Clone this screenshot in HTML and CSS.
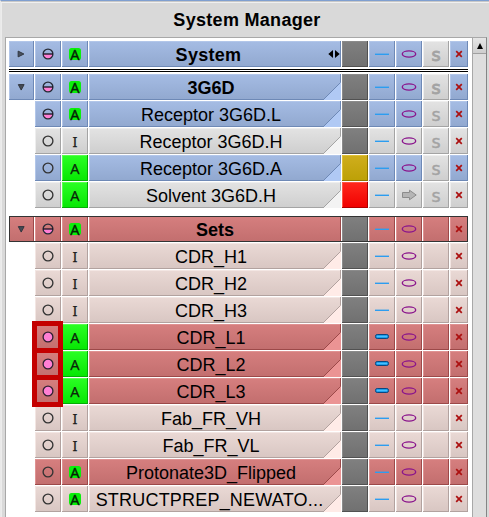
FILE: index.html
```html
<!DOCTYPE html>
<html lang="en">
<head>
<meta charset="utf-8">
<title>System Manager</title>
<link rel="stylesheet" href="styles.css">
</head>
<body>
<svg class="defs" width="0" height="0">
  <symbol id="right" viewBox="0 0 26 26"><path d="M9.5 10 15.5 13 9.5 16z" fill="#48505e" stroke="#30363f"/></symbol>
  <symbol id="down" viewBox="0 0 26 26"><path d="M9.7 10.5h6L12.7 16.2z" fill="#454a54" stroke="#30343c"/></symbol>
  <symbol id="ring" viewBox="0 0 26 26"><circle cx="13" cy="13" r="4.9" fill="none" stroke="#333" stroke-width="1.35"/></symbol>
  <symbol id="half" viewBox="0 0 26 26"><path d="M8 13a5 5 0 0 0 10 0z" fill="#ff7fd4"/><circle cx="13" cy="13" r="4.9" fill="none" stroke="#252a35" stroke-width="1.3"/><path d="M8 13h10" stroke="#181020" stroke-width="1.3"/></symbol>
  <symbol id="full" viewBox="0 0 26 26"><circle cx="13" cy="13" r="4.9" fill="#ff7fd4" stroke="#302030" stroke-width="1.3"/></symbol>
  <symbol id="line" viewBox="0 0 26 26"><path d="M6 13.3h14" stroke="#2c9df0" stroke-width="1.4"/></symbol>
  <symbol id="tube" viewBox="0 0 26 26"><rect x="6.5" y="10.5" width="13" height="4" rx="1.7" fill="#209eea" stroke="#0a4780"/><path d="M8 12.5h10" stroke="#48c0ff"/></symbol>
  <symbol id="oval" viewBox="0 0 26 26"><ellipse cx="13" cy="13" rx="6.7" ry="3.1" fill="none" stroke="#8a148c" stroke-width="1.4"/></symbol>
  <symbol id="arrow" viewBox="0 0 26 26"><path d="M6.5 10.5h7v-2.3l6.7 4.8-6.7 4.8v-2.3h-7z" fill="#b5b5b5" stroke="#8c8c8c"/></symbol>
  <symbol id="cross" viewBox="0 0 18 26"><path d="M6.2 10.2l5.6 5.6M11.8 10.2l-5.6 5.6" stroke="#ac1010" stroke-width="1.7"/></symbol>
  <symbol id="spread" viewBox="0 0 12 10"><path d="M5 1v8L.3 5zM7 1v8l4.7-4z" fill="#000"/></symbol>
</svg>
<main class="window">
  <h1 class="title">System Manager</h1>
  <div class="body">
    <div class="list" id="list"></div>
    <div class="scrollbar"><div class="up"><svg width="8" height="8" viewBox="0 0 8 8"><path d="M4 1 7 7H1z"/></svg></div><div class="track"></div></div>
  </div>
</main>
<script src="script.js"></script>
</body>
</html>
```
FILE: styles.css
```css
body {
  margin: 0;
  background: #d9d9d9;
  font-family: "Liberation Sans", Arial, sans-serif;
  color: #000;
  overflow: hidden;
}
.defs { display: block; width: 0; height: 0; position: absolute; }
svg { display: block; }
.window {
  box-sizing: border-box;
  height: 517px;
  display: flex;
  flex-direction: column;
  border-top: 1px solid #7f9fd0;
  border-left: 1px solid #e9e9e9;
  box-shadow: inset 0 1px #c8c8c8, inset 0 2px #f0f0f0, inset 1px 0 #ececec;
}
.title {
  margin: 0;
  height: 36px;
  font-size: 18px;
  letter-spacing: .3px;
  line-height: 38px;
  text-align: center;
  padding-left: 4px;
}
.body { flex: 1; display: flex; min-height: 0; padding-left: 4px; }
.list {
  width: 463px;
  padding: 3px 0 0 3px;
  background: #fff;
  border: solid #a8a8a8;
  border-width: 1px 0 0 1px;
  overflow: hidden;
}
.row {
  display: grid;
  grid-template-columns: 25px 26px 26px 252px 26px 26px 26px 26px 18px;
  gap: 1px;
  height: 26px;
  width: 459px;
  margin-bottom: 1px;
  position: relative;
  --top: #e3e3e3; --bottom: #cecece; --hi: #eeeeee; --lo: #a4a4a4; --fold: #f3f3f3;
}
.blue { --top: #a5bce4; --bottom: #91a8cf; --hi: #b2c6e9; --lo: #6e89b6; --fold: #b0c9f4; }
.red { --top: #d67f7f; --bottom: #c26e6e; --hi: #df9292; --lo: #9c4949; --fold: #eb9494; }
.pink { --top: #ead9d5; --bottom: #d8c6c2; --hi: #f3e6e3; --lo: #b2a29f; --fold: #ffebe7; }
.cell {
  display: flex;
  align-items: center;
  justify-content: center;
  position: relative;
  overflow: hidden;
  background: linear-gradient(var(--top), var(--bottom));
  box-shadow: inset -1px -1px var(--lo), inset 1px 1px var(--hi);
}
.cell.none { background: none; box-shadow: none; }
.gray { --top: #e3e3e3; --bottom: #cecece; --hi: #eeeeee; --lo: #a4a4a4; }
.dark { --top: #808080; --bottom: #707070; --hi: #8b8b8b; --lo: #515151; }
.gold { --top: #d0ae1d; --bottom: #bca006; --hi: #dfc035; --lo: #8f7800; }
.bright { --top: #ff2a1d; --bottom: #f00000; --hi: #ff5444; --lo: #b00000; }
.green { --top: #2bff24; --bottom: #06e603; --hi: #57ff4d; --lo: #04ac04; }
.name {
  box-sizing: border-box;
  font-size: 18px;
  line-height: 26px;
  white-space: pre;
  padding: 1px 8px 0 0;
}
.bold { font-weight: bold; }
.name.wide { letter-spacing: .3px; padding-right: 13px; }
.name.long { letter-spacing: .2px; padding-right: 11px; }
.name.plain { padding-right: 0; }
.corner { position: absolute; right: 0; bottom: 0; }
.corner .fill { fill: var(--fold); }
.corner .edge { stroke: var(--lo); fill: none; }
.spread { position: absolute; right: 1px; top: 8px; }
.letter { font: 14.5px/26px "Noto Sans", sans-serif; margin-top: -1px; color: #0b250b; -webkit-text-stroke: .25px; }
.bar { color: #202020; }
.badge {
  width: 12px;
  height: 12px;
  border-radius: 2.5px;
  background: #0aef0a;
  font: 14.5px/12px "Noto Sans", sans-serif;
  text-align: center;
  color: #062006;
  -webkit-text-stroke: .35px;
}
.s { font: 17.5px/24px "DejaVu Sans", sans-serif; color: #a3a3a3; margin-top: 1px; -webkit-text-stroke: .4px #a3a3a3; }
.s.heavy { -webkit-text-stroke-width: .9px; }
.rule { width: 459px; height: 1px; border: solid #000; border-width: 1px 0; margin: 2px 0; }
.sets { margin-top: 8px; }
.sets::after { content: ""; position: absolute; inset: 0; border: 1px solid #333; }
.focus {
  position: absolute;
  z-index: 1;
  left: 23px;
  top: -3px;
  width: 21px;
  height: 22px;
  border: 5px solid #c40000;
}
.scrollbar {
  width: 13px;
  display: flex;
  flex-direction: column;
  border: solid #a8a8a8;
  border-width: 1px 1px 0;
  border-right-color: #858585;
}
.up {
  height: 15px;
  display: flex;
  align-items: center;
  justify-content: center;
  background: linear-gradient(#e6e6e6, #cecece);
  border-bottom: 1px solid #a0a0a0;
}
.track { flex: 1; background: #dedede; }
```
FILE: script.js
```
const rows = [
  ["blue", "right", "half", "badge", "System", "dark", "line", "oval", "S"],
  "rule",
  ["blue", "down", "half", "badge", "3G6D", "dark", "line", "oval", "S"],
  ["blue", "", "half", "badge", "Receptor 3G6D.L", "dark", "line", "oval", "s"],
  ["plain", "", "ring", "I", "Receptor 3G6D.H", "dark", "line", "oval", "s"],
  ["blue", "", "ring", "A", "Receptor 3G6D.A", "gold", "line", "oval", "s"],
  ["plain", "", "ring", "A", "Solvent 3G6D.H", "bright", "line", "arrow", "s"],
  ["red sets", "down", "half", "badge", "Sets", "dark", "line", "oval", ""],
  ["pink", "", "ring", "I", "CDR_H1", "dark", "line", "oval", ""],
  ["pink", "", "ring", "I", "CDR_H2", "dark", "line", "oval", ""],
  ["pink", "", "ring", "I", "CDR_H3", "dark", "line", "oval", ""],
  ["red", "", "full", "A", "CDR_L1", "dark", "tube", "oval", ""],
  ["red", "", "full", "A", "CDR_L2", "dark", "tube", "oval", ""],
  ["red", "", "full", "A", "CDR_L3", "dark", "tube", "oval", ""],
  ["pink", "", "ring", "I", "Fab_FR_VH", "dark", "line", "oval", ""],
  ["pink", "", "ring", "I", "Fab_FR_VL", "dark", "line", "oval", ""],
  ["red", "", "ring", "badge", "Protonate3D_Flipped", "dark", "line", "oval", ""],
  ["pink", "", "ring", "badge", "STRUCTPREP_NEWATO...", "dark", "line", "oval", ""]
];
const nameClass = { System: "wide", Sets: "plain", "STRUCTPREP_NEWATO...": "long" };
const icon = (id, w = 26) => `<svg width="${w}" height="26"><use href="#${id}"/></svg>`;
const cell = (content, cls = "") => `<div class="cell ${cls}">${content}</div>`;
const corner = `<svg class="corner" width="18" height="18"><path class="fill" d="M0 18 18 0V18z"/><path class="edge" d="M0 18 17.5 .5"/></svg>`;

function state(value) {
  if (value === "badge") return cell(`<span class="badge">A</span>`);
  if (value === "A") return cell(`<span class="letter">A</span>`, "green");
  return cell(`<span class="letter bar">I</span>`);
}

document.getElementById("list").innerHTML = rows.map(r => {
  if (r === "rule") return `<div class="rule"></div>`;
  const [tone, toggle, pick, mode, name, color, style, shape, s] = r;
  const bold = toggle ? "bold" : "";
  const extra = name === "System"
    ? `<svg class="spread" width="12" height="10"><use href="#spread"/></svg>`
    : name === "Sets" ? "" : corner;
  return `<div class="row ${tone}">` +
    (toggle ? cell(icon(toggle)) : cell("", "none")) +
    cell(icon(pick)) + state(mode) +
    cell(name + extra, `name ${bold} ${nameClass[name] || ""}`) +
    cell("", color) + cell(icon(style)) + cell(icon(shape)) +
    (s ? cell(`<span class="s ${s === "S" ? "heavy" : ""}">s</span>`, "gray") : cell("")) +
    cell(icon("cross", 18)) +
    (pick === "full" ? `<div class="focus"></div>` : "") + `</div>`;
}).join("");
```
